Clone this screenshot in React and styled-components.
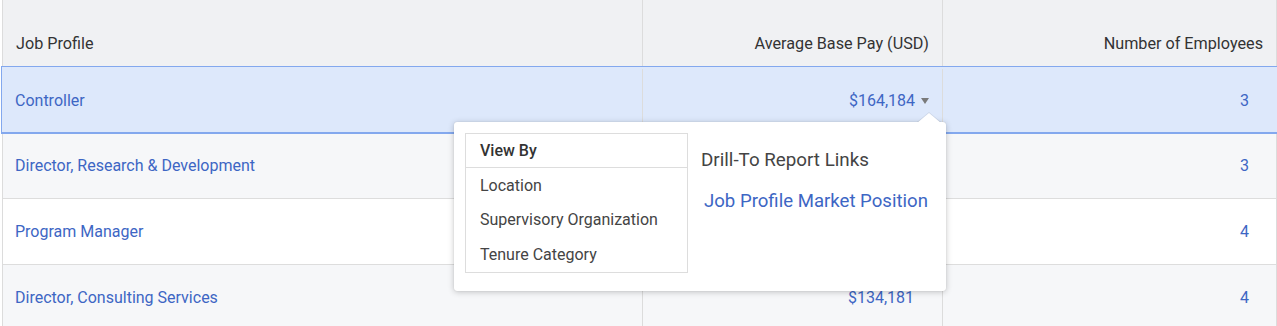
import React from "react";
import styled, { createGlobalStyle } from "styled-components";

const Global = createGlobalStyle`
  html, body { margin: 0; padding: 0; background: #fff; }
  body { font-family: Roboto, "Noto Sans", Arial, sans-serif; overflow: hidden; }
  * { box-sizing: border-box; }
`;

const Table = styled.div`
  margin-left: 2px;
  width: 1275px;
  border-left: 1px solid #dcdcdc;
  border-right: 1px solid #dcdcdc;
`;

const Row = styled.div`
  display: grid;
  grid-template-columns: 639px 300px 1fr;
  height: ${(p) => (p.$header ? 67 : 66)}px;
  background: ${(p) => p.$bg};
  border-bottom: 1px solid ${(p) => (p.$selected ? "#83a8ee" : "#dddddd")};
  position: relative;
  ${(p) =>
    p.$selected &&
    `outline: 1px solid #83a8ee; outline-offset: 0; margin-left: -1px; margin-right: -1px; padding-left: 1px; padding-right: 1px; padding-top: 2px; z-index: 1;`}
`;

const Cell = styled.div`
  display: flex;
  align-items: ${(p) => (p.$header ? "flex-end" : "center")};
  justify-content: ${(p) => (p.$right ? "flex-end" : "flex-start")};
  padding: ${(p) =>
    p.$header
      ? `0 13px 13px ${p.$right ? "0" : "13px"}`
      : `0 ${p.$pr || 0}px 0 ${p.$right ? 0 : 12}px`};
  border-left: ${(p) => (p.$first ? "none" : "1px solid #dcdcdc")};
  font-size: ${(p) => (p.$header ? "16.2px" : "16px")};
  color: ${(p) => (p.$header ? "#333333" : "#3d66c4")};
  position: relative;
  white-space: nowrap;
`;

const Caret = styled.span`
  display: inline-block;
  width: 0;
  height: 0;
  margin-left: 6px;
  margin-right: -15px;
  border-left: 4.5px solid transparent;
  border-right: 4.5px solid transparent;
  border-top: 6px solid #7a7a7a;
`;

const Popup = styled.div`
  position: absolute;
  left: -189px;
  top: 53px;
  width: 492px;
  height: 169px;
  background: #fff;
  border-radius: 3px;
  box-shadow: 0 1px 6px rgba(0, 0, 0, 0.22), 0 0 1px rgba(0, 0, 0, 0.2);
  display: flex;
  padding: 11px 0 0 11px;
  gap: 13px;
  z-index: 5;
  &::before {
    content: "";
    position: absolute;
    right: 5px;
    top: -9px;
    width: 0;
    height: 0;
    border-left: 12px solid transparent;
    border-right: 12px solid transparent;
    border-bottom: 10px solid #fff;
    filter: drop-shadow(0 -1px 0.5px rgba(0, 0, 0, 0.08));
  }
`;

const ViewList = styled.div`
  width: 223px;
  height: 140px;
  border: 1px solid #dddddd;
  display: flex;
  flex-direction: column;
`;

const ListHead = styled.div`
  height: 34px;
  border-bottom: 1px solid #dddddd;
  display: flex;
  align-items: center;
  padding-left: 14px;
  font-size: 16px;
  font-weight: 500;
  color: #333333;
`;

const ListItem = styled.div`
  height: 35px;
  display: flex;
  align-items: center;
  padding-left: 14px;
  font-size: 16px;
  color: #444444;
`;

const Links = styled.div`
  display: flex;
  flex-direction: column;
  padding-top: 15px;
`;

const LinksTitle = styled.div`
  font-size: 18.8px;
  color: #444444;
  line-height: 24px;
`;

const LinkItem = styled.div`
  margin-top: 17px;
  margin-left: 3px;
  font-size: 18.6px;
  color: #3d66c4;
  line-height: 24px;
`;

const rows = [
  { name: "Controller", pay: "$164,184", count: "3", bg: "#dde8fb", selected: true },
  { name: "Director, Research & Development", pay: "", count: "3", bg: "#f6f7f9" },
  { name: "Program Manager", pay: "", count: "4", bg: "#ffffff" },
  { name: "Director, Consulting Services", pay: "$134,181", count: "4", bg: "#f6f7f9" },
];

export default function App() {
  return (
    <>
      <Global />
      <Table>
        <Row $header $bg="#f0f1f3">
          <Cell $header $first>Job Profile</Cell>
          <Cell $header $right>Average Base Pay (USD)</Cell>
          <Cell $header $right>Number of Employees</Cell>
        </Row>
        {rows.map((r) => (
          <Row key={r.name} $bg={r.bg} $selected={r.selected}>
            <Cell $first>{r.name}</Cell>
            <Cell $right $pr={28}>
              {r.pay}
              {r.selected && <Caret />}
              {r.selected && (
                <Popup>
                  <ViewList>
                    <ListHead>View By</ListHead>
                    <ListItem>Location</ListItem>
                    <ListItem>Supervisory Organization</ListItem>
                    <ListItem>Tenure Category</ListItem>
                  </ViewList>
                  <Links>
                    <LinksTitle>Drill-To Report Links</LinksTitle>
                    <LinkItem>Job Profile Market Position</LinkItem>
                  </Links>
                </Popup>
              )}
            </Cell>
            <Cell $right $pr={27}>{r.count}</Cell>
          </Row>
        ))}
      </Table>
    </>
  );
}
